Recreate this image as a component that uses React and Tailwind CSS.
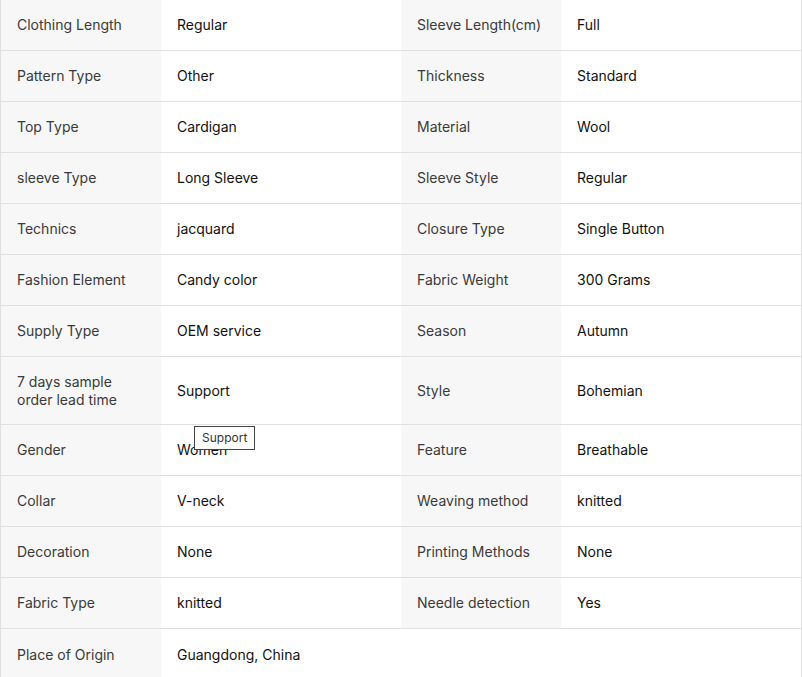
import React from "react";

const rows = [
  ["Clothing Length", "Regular", "Sleeve Length(cm)", "Full"],
  ["Pattern Type", "Other", "Thickness", "Standard"],
  ["Top Type", "Cardigan", "Material", "Wool"],
  ["sleeve Type", "Long Sleeve", "Sleeve Style", "Regular"],
  ["Technics", "jacquard", "Closure Type", "Single Button"],
  ["Fashion Element", "Candy color", "Fabric Weight", "300 Grams"],
  ["Supply Type", "OEM service", "Season", "Autumn"],
  ["7 days sample order lead time", "Support", "Style", "Bohemian"],
  ["Gender", "Women", "Feature", "Breathable"],
  ["Collar", "V-neck", "Weaving method", "knitted"],
  ["Decoration", "None", "Printing Methods", "None"],
  ["Fabric Type", "knitted", "Needle detection", "Yes"],
  ["Place of Origin", "Guangdong, China", null, null],
];

function Label({ children }) {
  return (
    <div className="w-[160px] shrink-0 bg-[#f7f7f7] px-4 flex items-center text-[#3a3a3a] font-normal">
      <span className="block">{children}</span>
    </div>
  );
}

function Value({ children }) {
  return (
    <div className="w-[240px] shrink-0 bg-white px-4 flex items-center text-[#111] font-normal">
      <span className="block">{children}</span>
    </div>
  );
}

export default function App() {
  return (
    <div
      className="relative w-[802px] h-[677px] overflow-hidden bg-white text-[14px] leading-[18px]"
      style={{ fontFamily: "Inter, 'Noto Sans', sans-serif" }}
    >
      <div className="border-l border-r border-[#e0e0e0] w-[802px] h-[677px]">
        {rows.map((r, i) => {
          const tall = i === 7;
          const last = i === rows.length - 1;
          return (
            <div
              key={i}
              className={`flex ${tall ? "h-[68px]" : "h-[51px]"} ${last ? "" : "border-b border-[#e0e0e0]"}`}
            >
              <Label>
                {tall ? (
                  <>
                    7 days sample
                    <br />
                    order lead time
                  </>
                ) : (
                  r[0]
                )}
              </Label>
              <Value>{r[1]}</Value>
              {r[2] ? (
                <>
                  <Label>{r[2]}</Label>
                  <Value>{r[3]}</Value>
                </>
              ) : (
                <div className="flex-1 bg-white" />
              )}
            </div>
          );
        })}
      </div>
      <div className="absolute left-[194px] top-[426px] h-[24px] px-[7px] border border-[#444] bg-white text-[12px] leading-[22px] text-[#333] font-normal">
        Support
      </div>
    </div>
  );
}
